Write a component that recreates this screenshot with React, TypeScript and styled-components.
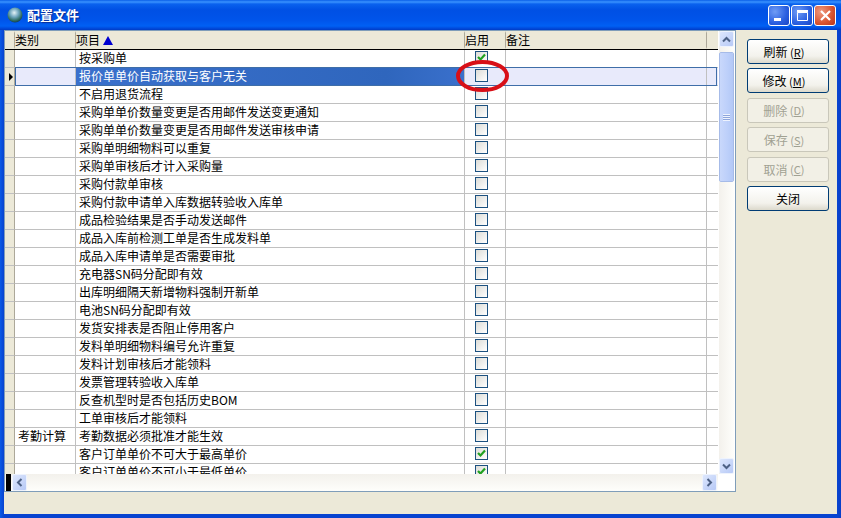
import styled, { createGlobalStyle } from "styled-components";

const GlobalStyle = createGlobalStyle`
  html, body {
    margin: 0;
    padding: 0;
    width: 841px;
    height: 518px;
    overflow: hidden;
    background: #0a4fdc;
  }
  * {
    box-sizing: border-box;
  }
`;

const Window = styled.div`
  width: 841px;
  height: 518px;
  display: flex;
  flex-direction: column;
  background: linear-gradient(90deg, #0a5ae6 0, #0843d0 4px, #0843d0 837px, #0a3fc8 841px);
  font-family: "Noto Sans CJK SC", "Liberation Sans", sans-serif;
  font-size: 12px;
  color: #000;
`;

const TitleBar = styled.div`
  height: 30px;
  flex: none;
  display: flex;
  align-items: center;
  padding: 0 5px 0 7px;
  background: linear-gradient(
    180deg,
    #0a5fe8 0,
    #3a93ff 2px,
    #0a62ee 4px,
    #0050e4 10px,
    #0054ea 20px,
    #0060f4 26px,
    #0044d4 29px,
    #003cc4 30px
  );
`;

const TitleText = styled.span`
  margin-left: 4px;
  color: #fff;
  font-size: 13px;
  font-weight: 700;
  line-height: 16px;
  text-shadow: 1px 1px 1px #0a2a90;
`;

const CaptionButtons = styled.div`
  margin-left: auto;
  display: flex;
  gap: 1px;
`;

const CaptionButton = styled.div<{ $close?: boolean }>`
  width: 22px;
  height: 21px;
  border: 1px solid #fff;
  border-radius: 3px;
  display: flex;
  align-items: center;
  justify-content: center;
  background: ${(p) =>
    p.$close
      ? "radial-gradient(circle at 30% 30%, #ee9a80, #d9532f 60%, #b8351a)"
      : "radial-gradient(circle at 30% 30%, #6f9cf5, #2a5fe0 60%, #1a45c4)"};
`;

const Client = styled.div`
  flex: 1;
  display: flex;
  margin: 0 4px 4px 4px;
  background: #ece9d8;
`;

const DataGrid = styled.div`
  position: relative;
  width: 732px;
  height: 462px;
  flex: none;
  border: 1px solid #7f9db9;
  background: #fff;
`;

const GridTop = styled.div`
  height: 443px;
  display: flex;
`;

const Table = styled.div`
  width: 713px;
  flex: none;
  overflow: hidden;
  margin-right: 1px;
`;

const columns = "10px 61px 389px 41px 201px 11px";

const HeaderRow = styled.div`
  height: 19px;
  display: grid;
  grid-template-columns: ${columns};
  background: #ece9d8;
  border-bottom: 1px solid #000;
`;

const HeaderCell = styled.div`
  display: flex;
  align-items: center;
  gap: 2px;
  height: 18px;
  margin-left: -1px;
  line-height: 16px;
  white-space: nowrap;
  border-left: 1px solid #aca899;
  border-top: 2px solid #ece9d8;
  border-bottom: 2px solid #ece9d8;
  &:first-child {
    border-left: none;
  }
`;

const SortArrow = styled.span`
  width: 0;
  height: 0;
  margin-left: 1px;
  border-left: 5px solid transparent;
  border-right: 5px solid transparent;
  border-bottom: 9px solid #0000d0;
`;

const Row = styled.div<{ $selected?: boolean }>`
  position: relative;
  height: 18px;
  display: grid;
  grid-template-columns: ${columns};
  background: ${(p) => (p.$selected ? "#e8eafb" : "#fff")};
  &::after {
    content: "";
    display: ${(p) => (p.$selected ? "block" : "none")};
    position: absolute;
    left: 10px;
    right: 1px;
    top: -1px;
    bottom: 0;
    border: 1px solid #3f6ea8;
    pointer-events: none;
  }
`;

const Cell = styled.div<{ $active?: boolean }>`
  height: 18px;
  line-height: 15px;
  padding-left: 3px;
  white-space: nowrap;
  overflow: hidden;
  border-right: 1px solid #c0c0c0;
  border-bottom: 1px solid #c0c0c0;
  background: ${(p) => (p.$active ? "linear-gradient(90deg, #3a70cc, #2f66bd 80%, #3a70cc)" : "transparent")};
  color: ${(p) => (p.$active ? "#fff" : "#000")};
`;

const EmptyCell = styled(Cell)`
  border-right: none;
`;

const Indicator = styled.div`
  height: 18px;
  display: flex;
  align-items: center;
  padding-left: 4px;
  background: #ece9d8;
  border-right: 1px solid #aca899;
  border-bottom: 1px solid #c0c0c0;
`;

const RowMarker = styled.span`
  width: 0;
  height: 0;
  border-top: 4px solid transparent;
  border-bottom: 4px solid transparent;
  border-left: 4px solid #000;
`;

const CheckCell = styled(Cell)`
  padding: 1px 0 0 10px;
`;

const CheckBox = styled.div`
  width: 13px;
  height: 13px;
  border: 1px solid #1c5180;
  display: flex;
  align-items: center;
  justify-content: center;
  background: linear-gradient(135deg, #dcdcd7, #ffffff);
`;

const VScroll = styled.div`
  width: 15px;
  flex: none;
  display: flex;
  flex-direction: column;
  background: linear-gradient(90deg, #f3f1ec, #fefefb);
`;

const ScrollButton = styled.div<{ $right?: boolean }>`
  flex: none;
  width: 15px;
  height: 16px;
  border: 1px solid #eef3fd;
  border-radius: 2px;
  display: flex;
  align-items: center;
  justify-content: center;
  background: linear-gradient(135deg, #dde7fd, #b7c9f6);
`;

const Thumb = styled.div`
  margin-top: 5px;
  height: 130px;
  flex: none;
  display: flex;
  align-items: center;
  justify-content: center;
  border: 1px solid #f4f7fe;
  outline: 1px solid #a6bbe8;
  outline-offset: -1px;
  border-radius: 2px;
  background: linear-gradient(90deg, #c9d8fb, #bccffa 60%, #b3c8f6);
`;

const Grip = styled.div`
  width: 7px;
  height: 7px;
  background: repeating-linear-gradient(180deg, #eef3fe 0, #eef3fe 1px, #8ea6dc 1px, #8ea6dc 2px);
`;

const Spacer = styled.div`
  flex: 1;
`;

const GridBottom = styled.div`
  height: 17px;
  display: flex;
`;

const HScroll = styled.div`
  width: 713px;
  flex: none;
  display: flex;
  align-items: center;
  background: linear-gradient(180deg, #f3f1ec, #fefefb);
`;

const BlackBar = styled.div`
  width: 5px;
  height: 17px;
  margin: 0 1px;
  background: #000;
`;

const HButton = styled(ScrollButton)`
  height: 17px;
  margin-left: ${(p) => (p.$right ? "auto" : "0")};
  margin-right: ${(p) => (p.$right ? "1px" : "0")};
`;

const Side = styled.div`
  margin-left: 11px;
  padding-top: 9px;
  width: 82px;
  flex: none;
  display: flex;
  flex-direction: column;
  gap: 4.4px;
`;

const Button = styled.div<{ $disabled?: boolean }>`
  height: 25px;
  display: flex;
  align-items: center;
  justify-content: center;
  white-space: pre;
  border-radius: 3px;
  border: 1px solid ${(p) => (p.$disabled ? "#c9c7ba" : "#003c74")};
  background: ${(p) => (p.$disabled ? "#f2f0e6" : "linear-gradient(180deg, #ffffff, #f3f2ec 70%, #dcd9cc)")};
  color: ${(p) => (p.$disabled ? "#a1a192" : "#000")};
`;

const Mnemonic = styled.span`
  margin-right: 8px;
  font-size: 11px;
`;

const Marker = styled.svg`
  position: absolute;
  left: 450px;
  top: 28px;
  pointer-events: none;
`;

const rows: { group?: string; name: string; checked?: boolean; selected?: boolean }[] = [
  { name: "按采购单", checked: true },
  { name: "报价单单价自动获取与客户无关", selected: true },
  { name: "不启用退货流程" },
  { name: "采购单单价数量变更是否用邮件发送变更通知" },
  { name: "采购单单价数量变更是否用邮件发送审核申请" },
  { name: "采购单明细物料可以重复" },
  { name: "采购单审核后才计入采购量" },
  { name: "采购付款单审核" },
  { name: "采购付款申请单入库数据转验收入库单" },
  { name: "成品检验结果是否手动发送邮件" },
  { name: "成品入库前检测工单是否生成发料单" },
  { name: "成品入库申请单是否需要审批" },
  { name: "充电器SN码分配即有效" },
  { name: "出库明细隔天新增物料强制开新单" },
  { name: "电池SN码分配即有效" },
  { name: "发货安排表是否阻止停用客户" },
  { name: "发料单明细物料编号允许重复" },
  { name: "发料计划审核后才能领料" },
  { name: "发票管理转验收入库单" },
  { name: "反查机型时是否包括历史BOM" },
  { name: "工单审核后才能领料" },
  { group: "考勤计算", name: "考勤数据必须批准才能生效" },
  { name: "客户订单单价不可大于最高单价", checked: true },
  { name: "客户订单单价不可小于最低单价", checked: true },
];

const actions = [
  { label: "刷新", key: "R" },
  { label: "修改", key: "M" },
  { label: "删除", key: "D", disabled: true },
  { label: "保存", key: "S", disabled: true },
  { label: "取消", key: "C", disabled: true },
  { label: "关闭" },
];

function Chevron({ points }: { points: string }) {
  return (
    <svg width="9" height="9" viewBox="0 0 9 9">
      <polyline points={points} fill="none" stroke="#4d6185" strokeWidth="2" />
    </svg>
  );
}

function Globe() {
  return (
    <svg width="16" height="16" viewBox="0 0 16 16">
      <defs>
        <radialGradient id="globe" cx="45%" cy="35%" r="65%">
          <stop offset="0" stopColor="#e4f2f6" />
          <stop offset="0.45" stopColor="#6fa6bd" />
          <stop offset="0.8" stopColor="#2f6d62" />
          <stop offset="1" stopColor="#123f5a" />
        </radialGradient>
      </defs>
      <circle cx="8" cy="8" r="7.5" fill="url(#globe)" />
    </svg>
  );
}

export default function App() {
  return (
    <Window>
      <GlobalStyle />
      <TitleBar>
        <Globe />
        <TitleText>配置文件</TitleText>
        <CaptionButtons>
          <CaptionButton>
            <svg width="13" height="13" viewBox="0 0 13 13">
              <rect x="1" y="9" width="7" height="3" fill="#fff" />
            </svg>
          </CaptionButton>
          <CaptionButton>
            <svg width="13" height="13" viewBox="0 0 13 13">
              <path d="M1.5 3.5h10v8h-10z" fill="none" stroke="#fff" />
              <rect x="1" y="1" width="11" height="2.5" fill="#fff" />
            </svg>
          </CaptionButton>
          <CaptionButton $close>
            <svg width="13" height="13" viewBox="0 0 13 13">
              <path d="M2 2l9 9M11 2l-9 9" stroke="#fff" strokeWidth="2.2" />
            </svg>
          </CaptionButton>
        </CaptionButtons>
      </TitleBar>
      <Client>
        <DataGrid>
          <GridTop>
            <Table>
              <HeaderRow>
                <HeaderCell />
                <HeaderCell>类别</HeaderCell>
                <HeaderCell>
                  项目
                  <SortArrow />
                </HeaderCell>
                <HeaderCell>启用</HeaderCell>
                <HeaderCell>备注</HeaderCell>
                <HeaderCell />
              </HeaderRow>
              {rows.map((row) => (
                <Row key={row.name} $selected={row.selected}>
                  <Indicator>{row.selected && <RowMarker />}</Indicator>
                  <Cell>{row.group}</Cell>
                  <Cell $active={row.selected}>{row.name}</Cell>
                  <CheckCell>
                    <CheckBox>
                      {row.checked && (
                        <svg width="11" height="11" viewBox="0 0 11 11">
                          <path d="M2 5l2.5 2.5L9 2.5" fill="none" stroke="#21a121" strokeWidth="2.2" />
                        </svg>
                      )}
                    </CheckBox>
                  </CheckCell>
                  <Cell />
                  <EmptyCell />
                </Row>
              ))}
            </Table>
            <VScroll>
              <ScrollButton>
                <Chevron points="1,6.5 4.5,3 8,6.5" />
              </ScrollButton>
              <Thumb>
                <Grip />
              </Thumb>
              <Spacer />
              <ScrollButton>
                <Chevron points="1,2.5 4.5,6 8,2.5" />
              </ScrollButton>
            </VScroll>
          </GridTop>
          <GridBottom>
            <HScroll>
              <BlackBar />
              <HButton>
                <Chevron points="6.5,1 3,4.5 6.5,8" />
              </HButton>
              <HButton $right>
                <Chevron points="2.5,1 6,4.5 2.5,8" />
              </HButton>
            </HScroll>
          </GridBottom>
          <Marker width="66" height="36" viewBox="0 0 66 36">
            <ellipse cx="27.5" cy="17" rx="24.5" ry="14" fill="none" stroke="#d80f17" strokeWidth="4" />
          </Marker>
        </DataGrid>
        <Side>
          {actions.map((action) => (
            <Button key={action.label} $disabled={action.disabled}>
              {action.label}
              {action.key && (
                <Mnemonic>
                  {" ("}
                  <u>{action.key}</u>
                  {")"}
                </Mnemonic>
              )}
            </Button>
          ))}
        </Side>
      </Client>
    </Window>
  );
}
